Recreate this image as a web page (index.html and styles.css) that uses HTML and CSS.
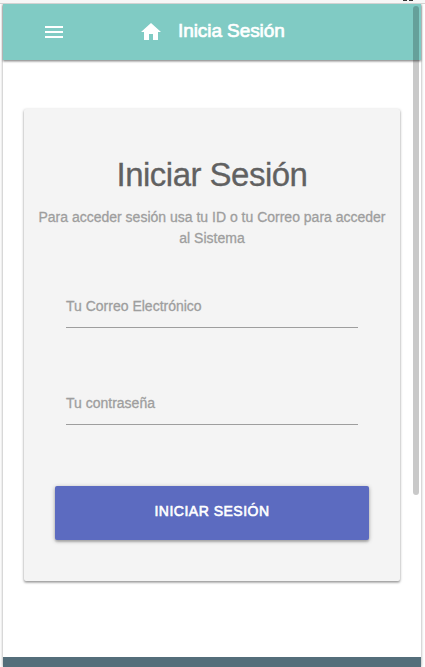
FILE: index.html
```html
<!DOCTYPE html>
<html lang="es">
<head>
<meta charset="utf-8">
<title>Inicia Sesión</title>
<link rel="stylesheet" href="styles.css">
</head>
<body>
<div class="frame">
  <div class="chrome"><span class="chrome-mark"></span></div>
  <div class="view">
    <header class="nav">
      <svg class="menu" viewBox="0 0 18 12"><path d="M0 0h18v2H0zM0 5h18v2H0zM0 10h18v2H0z"/></svg>
      <svg class="home" viewBox="2 3 20 17"><path d="M10 20v-6h4v6h5v-8h3L12 3 2 12h3v8z"/></svg>
      <span class="brand">Inicia Sesión</span>
    </header>
    <main class="content">
      <form class="card">
        <h1 class="title">Iniciar Sesión</h1>
        <p class="hint">Para acceder sesión usa tu ID o tu Correo para acceder<br>al Sistema</p>
        <label class="field">Tu Correo Electrónico</label>
        <label class="field">Tu contraseña</label>
        <button class="submit" type="button">INICIAR SESIÓN</button>
      </form>
    </main>
    <footer class="footer"></footer>
    <div class="scrollbar"></div>
  </div>
</div>
</body>
</html>
```
FILE: styles.css
```css
* { box-sizing: border-box; }
body {
  margin: 0;
  height: 667px;
  overflow: hidden;
  background: #fff;
  font-family: "Liberation Sans", Arial, sans-serif;
}
.frame { height: 667px; display: flex; flex-direction: column; }
.chrome {
  position: relative;
  z-index: 1;
  height: 4px;
  background: #f6f6f6;
  border-bottom: 1px solid #d2d2d2;
  display: flex;
  justify-content: flex-end;
  padding-right: 12px;
}
.chrome-mark {
  width: 10px;
  height: 1px;
  background: linear-gradient(90deg, #333 4px, transparent 4px 6px, #333 6px);
}
.view {
  position: relative;
  width: 418px;
  height: 663px;
  margin-left: 3px;
  display: flex;
  flex-direction: column;
  box-shadow: 0 0 3px rgba(0, 0, 0, .4);
}
.nav {
  height: 56px;
  flex: none;
  display: flex;
  align-items: flex-start;
  background: #80cbc4;
  box-shadow: 0 2px 2px rgba(0, 0, 0, .14), 0 1px 2px rgba(0, 0, 0, .4);
}
.menu { width: 18px; height: 12px; margin: 22px 0 0 42px; fill: #fff; }
.home { width: 20px; height: 17px; margin: 19px 0 0 78px; fill: #fff; }
.brand {
  margin-left: 17px;
  color: #fff;
  font-size: 19px;
  line-height: 53px;
  letter-spacing: -.08px;
  white-space: nowrap;
  -webkit-text-stroke: .7px #fff;
}
.content { flex: 1; padding: 49px 21px 0; }
.card {
  width: 376px;
  height: 472px;
  padding: 48px 0 0;
  display: flex;
  flex-direction: column;
  background: #f4f4f4;
  border-radius: 2px;
  box-shadow: 0 2px 2px rgba(0, 0, 0, .14), 0 1px 3px rgba(0, 0, 0, .36);
}
.title {
  margin: 0;
  text-align: center;
  color: #616161;
  font-size: 33px;
  font-weight: 400;
  line-height: 36px;
  letter-spacing: -.52px;
  -webkit-text-stroke: .3px #616161;
}
.hint {
  margin: 14px 0 33px;
  text-align: center;
  color: #9e9e9e;
  font-size: 14px;
  line-height: 21px;
  white-space: nowrap;
  -webkit-text-stroke: .3px #9e9e9e;
}
.field {
  height: 46px;
  margin: 0 42px 51px;
  padding-top: 14px;
  border-bottom: 1px solid #9e9e9e;
  color: #9e9e9e;
  font-size: 14px;
  line-height: 20px;
  -webkit-text-stroke: .3px #9e9e9e;
}
.submit {
  width: 314px;
  height: 54px;
  margin: 10px 0 0 31px;
  padding: 0 0 4px;
  border: 0;
  border-radius: 2px;
  background: #5c6bc0;
  color: #fff;
  font: 14px "Liberation Sans", Arial, sans-serif;
  letter-spacing: .5px;
  -webkit-text-stroke: .6px #fff;
  box-shadow: 0 2px 2px rgba(0, 0, 0, .16), 0 1px 4px rgba(0, 0, 0, .3);
}
.footer { height: 10px; flex: none; background: #546e7a; }
.scrollbar {
  position: absolute;
  top: 2px;
  right: 2px;
  width: 6px;
  height: 489px;
  border-radius: 3px;
  background: rgba(0, 0, 0, .21);
}
```
